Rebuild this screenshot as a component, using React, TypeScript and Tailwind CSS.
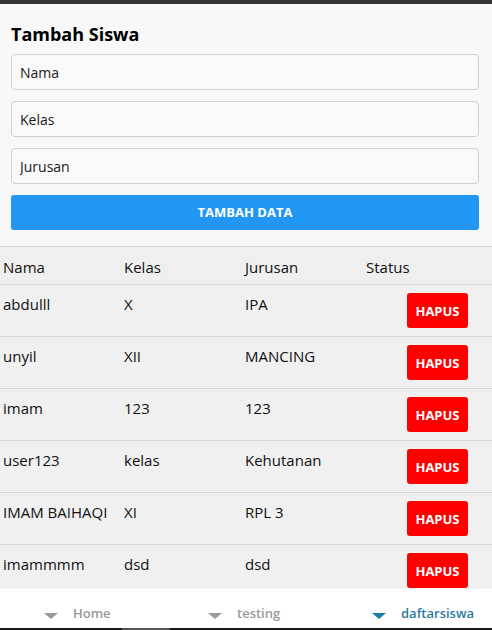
const students = [
  { nama: "abdulll", kelas: "X", jurusan: "IPA" },
  { nama: "unyil", kelas: "XII", jurusan: "MANCING" },
  { nama: "imam", kelas: "123", jurusan: "123" },
  { nama: "user123", kelas: "kelas", jurusan: "Kehutanan" },
  { nama: "IMAM BAIHAQI", kelas: "XI", jurusan: "RPL 3" },
  { nama: "imammmm", kelas: "dsd", jurusan: "dsd" },
];

const tabs = [
  { label: "Home", active: false },
  { label: "testing", active: false },
  { label: "daftarsiswa", active: true },
];

function Field({ placeholder }: { placeholder: string }) {
  return (
    <input
      placeholder={placeholder}
      className="h-[36px] w-full rounded-[4px] border border-[#cfcfcf] bg-[#f9f9f9] px-[8px] text-[14px] text-[#111] outline-none placeholder:text-[#1a1a1a]"
    />
  );
}

function Caret({ color }: { color: string }) {
  return (
    <svg width="14" height="6" viewBox="0 0 14 6" className="mt-[6px]">
      <polygon points="0,0 14,0 7,6" fill={color} />
    </svg>
  );
}

export default function App() {
  return (
    <div
      className="flex h-[630px] w-[492px] flex-col overflow-hidden bg-white text-[#111]"
      style={{ fontFamily: '"Open Sans", "Noto Sans", sans-serif' }}
    >
      <div className="h-[4px] shrink-0 bg-[#333]" />

      <div className="flex-1 overflow-hidden">
        <div className="border-b border-[#d6d6d6] bg-[#f8f8f8] pb-[16px] pl-[11px] pr-[13px] pt-[19px]">
          <h1 className="text-[18px] font-bold leading-[22px] text-black">Tambah Siswa</h1>
          <div className="mt-[9px] flex flex-col gap-[11px]">
            <Field placeholder="Nama" />
            <Field placeholder="Kelas" />
            <Field placeholder="Jurusan" />
            <button className="h-[35px] w-full rounded-[3px] bg-[#2196f3] text-[13px] font-bold text-white">
              TAMBAH DATA
            </button>
          </div>
        </div>

        <div className="grid h-[38px] grid-cols-[121px_121px_121px_1fr] border-b border-[#d6d6d6] bg-[#efefef] pl-[3px] pt-[8px] text-[15px] leading-[24px]">
          <span>Nama</span>
          <span>Kelas</span>
          <span>Jurusan</span>
          <span>Status</span>
        </div>

        {students.map((s) => (
          <div
            key={s.nama}
            className="grid h-[52px] grid-cols-[121px_121px_121px_1fr] border-b border-[#d6d6d6] bg-[#f0f0f0] pl-[3px] text-[15px]"
          >
            <span className="whitespace-nowrap pt-[7px] leading-[24px]">{s.nama}</span>
            <span className="pt-[7px] leading-[24px]">{s.kelas}</span>
            <span className="pt-[7px] leading-[24px]">{s.jurusan}</span>
            <div className="flex pl-[41px] pt-[8px]">
              <button className="flex h-[35px] w-[61px] items-center justify-center rounded-[3px] bg-[#ff0000] pt-[2px] text-[13px] font-bold text-white">
                HAPUS
              </button>
            </div>
          </div>
        ))}
      </div>

      <nav className="grid h-[39px] shrink-0 grid-cols-3 bg-white pt-[14px]">
        {tabs.map((t) => (
          <div key={t.label} className="flex items-center gap-[15px] self-start pl-[44px]">
            <Caret color={t.active ? "#1b7ca6" : "#9a9a9a"} />
            <span
              className={`text-[13px] font-semibold leading-[20px] ${t.active ? "text-[#2a7b9b]" : "text-[#9a9a9a]"}`}
            >
              {t.label}
            </span>
          </div>
        ))}
      </nav>

      <div className="flex h-[2px] shrink-0 bg-[#1a1a1a]">
        <div className="ml-[122px] w-[48px] bg-[#555]" />
      </div>
    </div>
  );
}
